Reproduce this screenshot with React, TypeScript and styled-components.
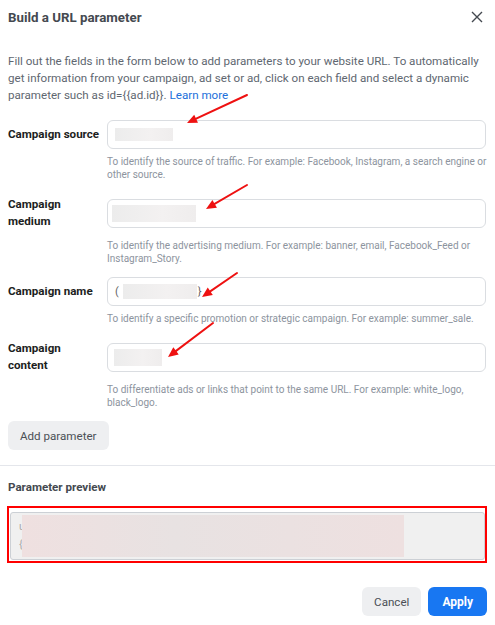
import styled, { createGlobalStyle } from 'styled-components';

const Global = createGlobalStyle`
    html, body {
        margin: 0;
        padding: 0;
        background: #fff;
    }
    body {
        font-family: Roboto, "Liberation Sans", Arial, sans-serif;
        color: #1c1e21;
    }
    * {
        box-sizing: border-box;
    }
`;

const Dialog = styled.div`
    position: relative;
    width: 495px;
    height: 625px;
    overflow: hidden;
    background: #fff;
`;
const Header = styled.div`
    display: flex;
    align-items: center;
    justify-content: space-between;
    height: 34px;
    padding: 0 8px 0 8px;
`;
const Title = styled.h1`
    margin: 0;
    font-size: 13.3px;
    font-weight: 700;
    color: #444950;
`;
const CloseButton = styled.button`
    display: flex;
    border: none;
    background: none;
    padding: 4px;
    cursor: pointer;
`;
const Body = styled.div`
    padding: 19px 9px 0 8px;
`;
const Intro = styled.p`
    margin: 0 0 16px;
    font-size: 11.6px;
    line-height: 17px;
    color: #606770;
`;
const Link = styled.a`
    margin-left: 3px;
    color: #216fdb;
    text-decoration: none;
`;
const Field = styled.div`
    margin-bottom: 12px;
`;
const Row = styled.div`
    display: flex;
    align-items: center;
`;
const Label = styled.label<{ $narrow?: boolean }>`
    width: ${(p) => (p.$narrow ? 80 : 99)}px;
    margin-right: ${(p) => (p.$narrow ? 19 : 0)}px;
    flex-shrink: 0;
    padding: 3px 0;
    font-size: 11.6px;
    font-weight: 700;
    line-height: 17px;
    color: #1c1e21;
`;
const InputBox = styled.div`
    flex: 1;
    height: 29px;
    display: flex;
    align-items: center;
    padding: 0 6px;
    border: 1px solid #dadde1;
    border-radius: 6px;
    background: #fff;
    font-size: 12px;
    color: #444;
`;
const Blur = styled.span<{ $w: number; $h: number; $shift: number }>`
    display: inline-block;
    width: ${(p) => p.$w}px;
    height: ${(p) => p.$h}px;
    margin-left: ${(p) => p.$shift}px;
    background: linear-gradient(90deg, #ececec, #f3f1f1 60%, #efeded);
`;
const Brace = styled.span`
    font-size: 11px;
    color: #666;
    margin: 0 1px;
`;
const Help = styled.p`
    margin: 6px -4px 0 99px;
    font-size: 10px;
    line-height: 13px;
    color: #8d949e;
`;
const GreyButton = styled.button`
    height: 29px;
    padding: 0 12px;
    border: none;
    border-radius: 6px;
    background: #eeeff1;
    font-family: inherit;
    font-size: 11.6px;
    color: #4b4f56;
`;
const Divider = styled.hr`
    margin: 15px 0 0;
    border: none;
    border-top: 1px solid #e4e6eb;
`;
const Section = styled.div`
    padding: 14px 8px 0 7px;
`;
const SectionTitle = styled.h2`
    margin: 0 0 12px 1px;
    font-size: 11.6px;
    font-weight: 700;
    color: #444950;
`;
const Highlight = styled.div`
    border: 2px solid #ff0000;
    padding: 4px 0 1px 1px;
`;
const Preview = styled.div`
    height: 48px;
    border: 1px solid #ccd0d5;
    border-radius: 3px;
    background: #f0f0f0;
    display: flex;
    align-items: center;
    padding-left: 8px;
`;
const PreviewChars = styled.div`
    width: 3px;
    display: flex;
    flex-direction: column;
    font-size: 11px;
    line-height: 18px;
    color: #aaa;
`;
const PreviewBlur = styled.div`
    position: relative;
    width: 382px;
    height: 42px;
    background: linear-gradient(90deg, #efe0e0, #e8e2e2 40%, #eee0e0);
`;
const Footer = styled.div`
    display: flex;
    justify-content: flex-end;
    gap: 7px;
    padding: 24px 8px 0;
`;
const PrimaryButton = styled.button`
    height: 29px;
    padding: 0 14px;
    border: none;
    border-radius: 6px;
    background: #1877f2;
    font-family: inherit;
    font-size: 12px;
    font-weight: 700;
    color: #fff;
`;
const Arrows = styled.svg`
    position: absolute;
    top: 0;
    left: 0;
    pointer-events: none;
`;

const arrows = [
    [247, 95, 187, 123],
    [247, 185, 206, 209],
    [237, 273, 202, 297],
    [213, 323, 168, 357],
];

const Arrow = ({ x1, y1, x2, y2 }: { x1: number; y1: number; x2: number; y2: number }) => {
    const a = Math.atan2(y2 - y1, x2 - x1);
    const len = 11;
    const spread = 0.42;
    const p1 = [x2 - len * Math.cos(a - spread), y2 - len * Math.sin(a - spread)];
    const p2 = [x2 - len * Math.cos(a + spread), y2 - len * Math.sin(a + spread)];
    return (
        <g>
            <line x1={x1} y1={y1} x2={x2 - 6 * Math.cos(a)} y2={y2 - 6 * Math.sin(a)} stroke="#ee1111" strokeWidth="2" strokeLinecap="round" />
            <polygon points={`${x2},${y2} ${p1[0]},${p1[1]} ${p2[0]},${p2[1]}`} fill="#ee1111" />
        </g>
    );
};

const fields = [
    {
        label: 'Campaign source',
        help: 'To identify the source of traffic. For example: Facebook, Instagram, a search engine or other source.',
        blur: [58, 13],
        offset: 1,
    },
    {
        label: 'Campaign medium',
        help: 'To identify the advertising medium. For example: banner, email, Facebook_Feed or Instagram_Story.',
        blur: [84, 17],
        offset: -2,
        twoLine: true,
    },
    {
        label: 'Campaign name',
        help: 'To identify a specific promotion or strategic campaign. For example: summer_sale.',
        blur: [74, 15],
        offset: 3,
        braces: true,
    },
    {
        label: 'Campaign content',
        help: 'To differentiate ads or links that point to the same URL. For example: white_logo, black_logo.',
        blur: [48, 17],
        offset: 0,
        twoLine: true,
    },
];

const App = () => {
    return (
        <Dialog>
            <Global />
            <Header>
                <Title>Build a URL parameter</Title>
                <CloseButton aria-label="Close">
                    <svg width="12" height="12" viewBox="0 0 12 12">
                        <path d="M1 1L11 11M11 1L1 11" stroke="#444950" strokeWidth="1.4" />
                    </svg>
                </CloseButton>
            </Header>
            <Body>
                <Intro>
                    {'Fill out the fields in the form below to add parameters to your website URL. To automatically get information from your campaign, ad set or ad, click on each field and select a dynamic parameter such as id={{ad.id}}.'}
                    <Link href="#">Learn more</Link>
                </Intro>
                {fields.map((f) => (
                    <Field key={f.label}>
                        <Row>
                            <Label $narrow={f.twoLine}>{f.label}</Label>
                            <InputBox>
                                {f.braces && <Brace>(</Brace>}
                                <Blur $w={f.blur[0]} $h={f.blur[1]} $shift={f.offset} />
                                {f.braces && <Brace>{'}'}</Brace>}
                            </InputBox>
                        </Row>
                        <Help>{f.help}</Help>
                    </Field>
                ))}
                <GreyButton>Add parameter</GreyButton>
            </Body>
            <Divider />
            <Section>
                <SectionTitle>Parameter preview</SectionTitle>
                <Highlight>
                    <Preview>
                        <PreviewChars>
                            <span>u</span>
                            <span>{'{'}</span>
                        </PreviewChars>
                        <PreviewBlur />
                    </Preview>
                </Highlight>
            </Section>
            <Footer>
                <GreyButton>Cancel</GreyButton>
                <PrimaryButton>Apply</PrimaryButton>
            </Footer>
            <Arrows width="495" height="625">
                {arrows.map(([x1, y1, x2, y2]) => (
                    <Arrow key={`${x1}-${y1}`} x1={x1} y1={y1} x2={x2} y2={y2} />
                ))}
            </Arrows>
        </Dialog>
    );
};
export default App;
